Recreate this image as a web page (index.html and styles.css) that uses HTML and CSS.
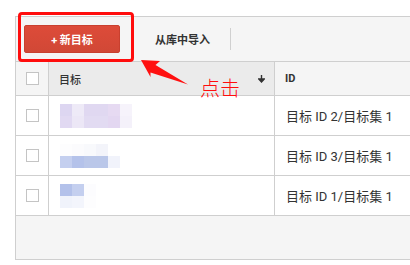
FILE: index.html
```html
<!DOCTYPE html>
<html>
<head>
<meta charset="utf-8">
<link rel="stylesheet" href="styles.css">
</head>
<body>
<div class="panel">
  <div class="toolbar">
    <button class="btn-new">+ 新目标</button>
    <button class="btn-import">从库中导入</button>
    <span class="sep"></span>
  </div>
  <table class="grid">
    <tr class="head">
      <th class="chk"><span class="box"></span></th>
      <th class="name">目标<svg class="sort" width="7" height="8" viewBox="0 0 7 8"><path d="M3.5 0v6M0.8 4l2.7 3 2.7-3z" stroke="#333" stroke-width="1.4" fill="#333"/></svg></th>
      <th class="id">ID</th>
    </tr>
    <tr>
      <td class="chk"><span class="box"></span></td>
      <td class="name">
        <div class="blur">
          <div class="px-row"><i style="background:#ddd6f1"></i><i style="background:#eeeaf7"></i><i class="w2" style="background:#e0d8f1"></i><i style="background:#e6daf2"></i><i style="background:#f6f3fb"></i></div>
          <div class="px-row"><i style="background:#e1d9f2"></i><i style="background:#ece7f6"></i><i class="w2" style="background:#e2dbf2"></i><i style="background:#e3d7f1"></i><i style="background:#f4f1fa"></i></div>
        </div>
      </td>
      <td class="id">目标 ID 2/目标集 1</td>
    </tr>
    <tr>
      <td class="chk"><span class="box"></span></td>
      <td class="name">
        <div class="blur">
          <div class="px-row"><i style="background:#fdfdfe"></i><i style="background:#fbfbfd"></i><i style="background:#f8f9fc"></i><i style="background:#f3f4fa"></i></div>
          <div class="px-row"><i style="background:#c4cfef"></i><i style="background:#b4c2ea"></i><i class="w2" style="background:#bac7e9"></i><i style="background:#f1f3fb"></i></div>
        </div>
      </td>
      <td class="id">目标 ID 3/目标集 1</td>
    </tr>
    <tr>
      <td class="chk"><span class="box"></span></td>
      <td class="name">
        <div class="blur">
          <div class="px-row"><i style="background:#b3c1ea"></i><i style="background:#c4cfef"></i><i style="background:#fcfcfe"></i></div>
          <div class="px-row"><i style="background:#f0f3fb"></i><i style="background:#f3f5fc"></i><i style="background:#fdfdfe"></i></div>
        </div>
      </td>
      <td class="id">目标 ID 1/目标集 1</td>
    </tr>
  </table>
  <div class="footer"></div>
</div>

<!-- annotation drawn over the screenshot -->
<div class="mark"></div>
<svg class="arrow" width="50" height="28" viewBox="0 0 50 28">
  <path d="M0 0 L19 1 L14.5 5 L47 24.5 L9.5 12.5 L9.5 17 Z" fill="#ff1010"/>
</svg>
<div class="note">点击</div>
</body>
</html>
```

FILE: styles.css
```css
body {
  margin: 0;
  background-color: #fff;
  font-family: Roboto, "Noto Sans CJK SC", sans-serif;
  overflow: hidden;
  position: relative;
}
.panel {
  margin: 16px 0 0 15px;
  border: 1px solid #cfcfcf;
  border-right: none;
}
.toolbar {
  display: flex;
  align-items: center;
  height: 44px;
  padding-left: 8px;
  background-color: #f5f5f5;
  border-bottom: 1px solid #cfcfcf;
}
.btn-new {
  width: 96px;
  height: 28px;
  border: 1px solid #c9402f;
  border-radius: 2px;
  background: linear-gradient(#dd4b39, #d14836);
  color: #fff;
  font-family: inherit;
  font-size: 11px;
  font-weight: bold;
  padding: 0;
}
.btn-import {
  margin-left: 23px;
  padding: 0 12px;
  height: 28px;
  border: none;
  background: none;
  color: #333;
  font-family: inherit;
  font-size: 11px;
  font-weight: bold;
}
.sep {
  width: 1px;
  height: 22px;
  margin-left: 8px;
  background-color: #d0d0d0;
}
.grid {
  width: 100%;
  border-collapse: collapse;
  font-size: 12px;
  color: #333;
}
.grid th, .grid td {
  border: 1px solid #cfcfcf;
  padding: 0;
  text-align: left;
}
.grid tr:first-child th { border-top: none; }
.grid .chk { border-left: none; }
.grid .id { border-right: none; }
.head th {
  height: 33px;
  background-color: #f5f5f5;
  font-weight: 500;
  font-size: 11px;
}
.head .name {
  background-color: #ebebeb;
  padding-left: 10px;
  position: relative;
}
.head .id {
  padding-left: 10px;
  font-weight: bold;
}
.sort {
  position: absolute;
  right: 9px;
  top: 13px;
}
.grid td {
  height: 39px;
  background-color: #fff;
}
.chk {
  width: 32px;
  text-align: center !important;
}
.box {
  display: block;
  width: 11px;
  height: 11px;
  margin: 0 auto;
  border: 1px solid #c4c4c4;
  background-color: #fff;
}
.name { width: 214px; }
td.name { padding-left: 11px !important; }
td.id {
  padding-left: 11px !important;
  font-size: 13px;
  color: #333;
}
.blur { width: 72px; }
.px-row { display: flex; height: 12px; }
.px-row i { display: block; width: 12px; height: 12px; }
.px-row i.w2 { width: 24px; }
.footer {
  height: 43px;
  background-color: #f5f5f5;
}
.mark {
  position: absolute;
  left: 18px;
  top: 12px;
  width: 110px;
  height: 44px;
  border: 3px solid #ff0d0d;
  border-radius: 4px;
}
.arrow {
  position: absolute;
  left: 141px;
  top: 60px;
}
.note {
  position: absolute;
  left: 200px;
  top: 76px;
  font-family: "Noto Sans CJK SC", sans-serif;
  font-size: 20px;
  font-weight: 300;
  color: #ff0d0d;
  line-height: 24px;
}
```
